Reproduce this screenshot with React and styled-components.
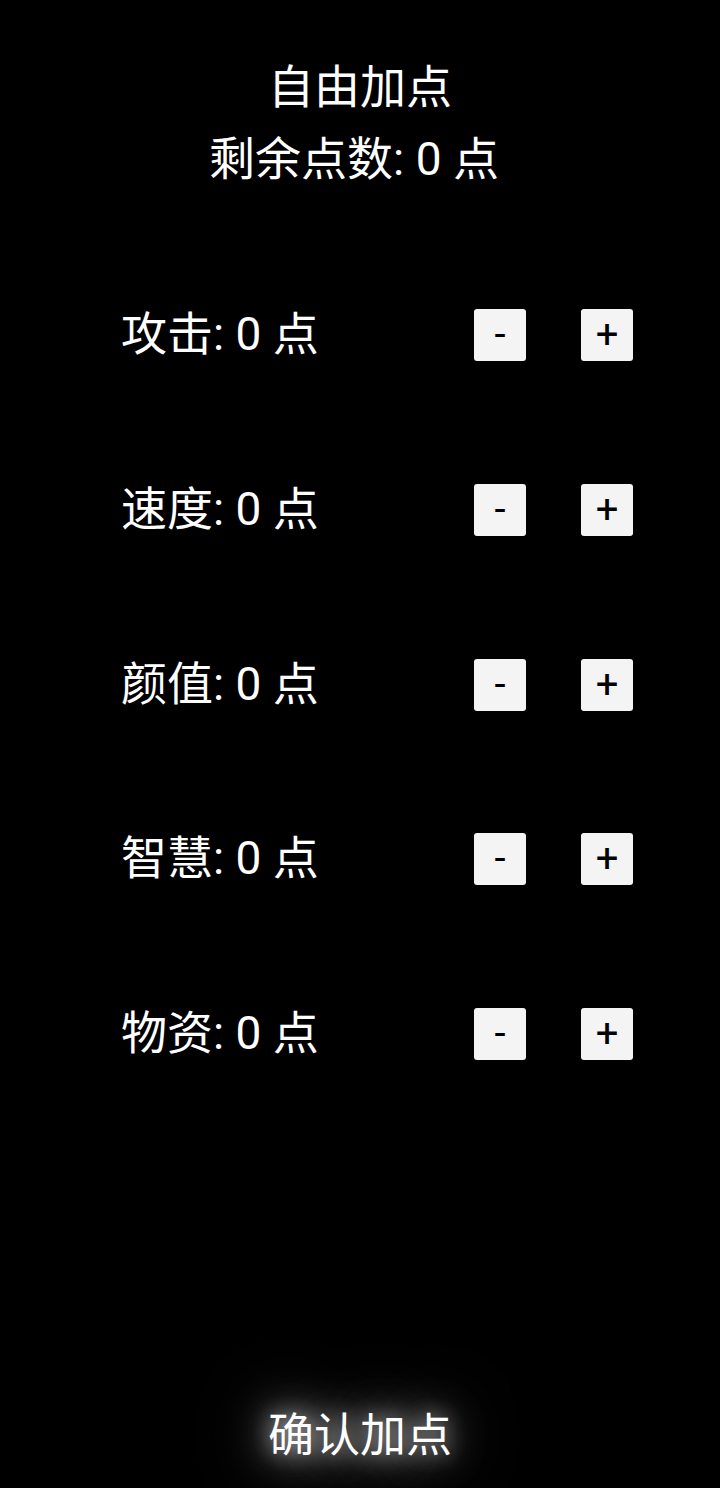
import React, { useState } from 'react'
import styled, { createGlobalStyle } from 'styled-components'

const GlobalStyle = createGlobalStyle`
    html, body {
        margin: 0;
        padding: 0;
        background: #000;
    }
    body {
        font-family: Roboto, "Noto Sans CJK SC", sans-serif;
        color: #fff;
    }
`

const STATS = ['攻击', '速度', '颜值', '智慧', '物资'];

function App() {
    const [points, setPoints] = useState([0, 0, 0, 0, 0]);
    const [left, setLeft] = useState(0);

    const change = (i, d) => {
        const next = points[i] + d;
        if (next < 0) return;
        if (d > 0 && left <= 0) return;
        const copy = [...points];
        copy[i] = next;
        setPoints(copy);
        setLeft(left - d);
    }

    return (
        <Page>
            <GlobalStyle />
            <Header>
                <Title>自由加点</Title>
                <Remain>剩余点数: {left} 点</Remain>
            </Header>
            <StatList>
                {STATS.map((name, i) => (
                    <StatRow key={name}>
                        <StatLabel>{name}: {points[i]} 点</StatLabel>
                        <BtnGroup>
                            <StepBtn onClick={() => change(i, -1)}>-</StepBtn>
                            <StepBtn onClick={() => change(i, 1)}>+</StepBtn>
                        </BtnGroup>
                    </StatRow>
                ))}
            </StatList>
            <ConfirmBtn>确认加点</ConfirmBtn>
        </Page>
    )
}

export default App

const Page = styled.div`
    min-height: 1488px;
    box-sizing: border-box;
    display: flex;
    flex-direction: column;
    align-items: center;
    padding: 52px 0 18px;
    background: #000;
`

const Header = styled.div`
    display: flex;
    flex-direction: column;
    align-items: center;
`

const Title = styled.div`
    font-size: 46px;
    line-height: 70px;
`

const Remain = styled.div`
    font-size: 46px;
    line-height: 74px;
    margin-right: 12px;
`

const StatList = styled.div`
    margin-top: 113px;
    width: 512px;
    margin-left: 34px;
    display: flex;
    flex-direction: column;
    gap: 122.75px;
`

const StatRow = styled.div`
    display: flex;
    align-items: center;
    justify-content: space-between;
    height: 52px;
`

const StatLabel = styled.div`
    font-size: 46px;
    line-height: 52px;
    margin-top: -2px;
    white-space: pre;
`

const BtnGroup = styled.div`
    display: flex;
    gap: 55px;
`

const StepBtn = styled.button`
    width: 52px;
    height: 52px;
    padding: 0;
    border: none;
    border-radius: 3px;
    background: #f4f4f4;
    color: #000;
    font-family: Roboto, sans-serif;
    font-size: 40px;
    line-height: 52px;
    cursor: pointer;
`

const ConfirmBtn = styled.button`
    margin-top: auto;
    background: transparent;
    border: none;
    padding: 0;
    color: #fff;
    font-family: Roboto, "Noto Sans CJK SC", sans-serif;
    font-size: 46px;
    line-height: 70px;
    text-shadow: 0 0 20px rgba(255, 255, 255, 0.6), 0 0 40px rgba(255, 255, 255, 0.7), 0 0 70px rgba(255, 255, 255, 0.6);
    cursor: pointer;
`
